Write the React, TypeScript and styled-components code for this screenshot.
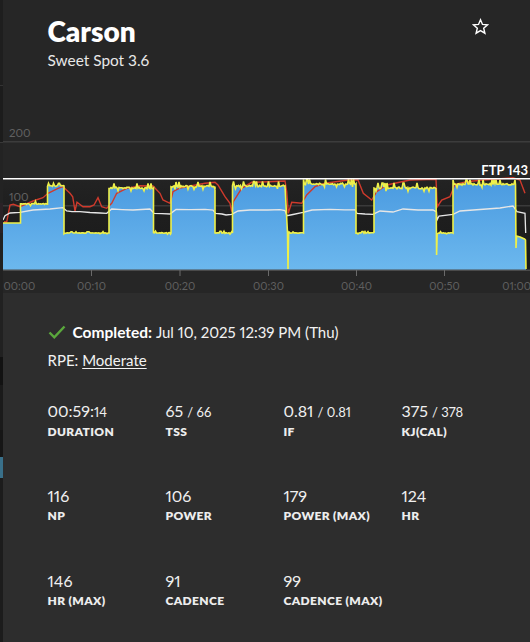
import React from "react";
import styled, { createGlobalStyle } from "styled-components";

const Global = createGlobalStyle`
  html, body { margin: 0; padding: 0; background: #262626; }
  body {
    font-family: Lato, "Open Sans", "Liberation Sans", sans-serif;
    font-variant-numeric: proportional-nums;
  }
`;

const Page = styled.div`
  width: 530px;
  height: 642px;
  display: flex;
  overflow: hidden;
  color: #fff;
`;
const Strip = styled.div`
  width: 3px;
  flex: none;
  display: flex;
  flex-direction: column;
`;
const StripPiece = styled.div<{ $h: number; $c: string }>`
  height: ${(p) => p.$h}px;
  background: ${(p) => p.$c};
  flex: none;
`;
const Main = styled.main`
  flex: 1;
  min-width: 0;
  display: flex;
  flex-direction: column;
`;
const Header = styled.header`
  height: 125px;
  flex: none;
  box-sizing: border-box;
  padding: 15px 41px 0 44.5px;
  display: flex;
  justify-content: space-between;
  align-items: flex-start;
  background: #262626;
`;
const Title = styled.h1`
  margin: 0;
  font-size: 28px;
  line-height: 32px;
  font-weight: 800;
`;
const Subtitle = styled.p`
  margin: 3px 0 0;
  font-size: 15.4px;
  line-height: 20px;
  color: #e8e8e8;
`;
const StarIcon = styled.svg`
  width: 17px;
  height: 17px;
  margin-top: 3px;
  flex: none;
`;
const Chart = styled.svg`
  display: block;
  width: 527px;
  height: 168px;
  flex: none;
  background: #262626;
`;
const AxisText = styled.text`
  font-size: 11px;
  fill: #5f5f5f;
  font-family: Lato, sans-serif;
`;
const ScaleText = styled.text`
  font-size: 11.5px;
  fill: #616161;
  font-family: Lato, sans-serif;
`;
const FtpText = styled.text`
  font-size: 13px;
  font-weight: 700;
  fill: #fff;
  font-family: Lato, sans-serif;
`;
const Summary = styled.section`
  flex: 1;
  min-height: 0;
  background: #2d2d2d;
  padding: 29px 0 0 44.5px;
`;
const Completed = styled.div`
  display: flex;
  align-items: center;
  font-size: 15px;
  line-height: 20px;
  color: #f2f2f2;
  white-space: pre;
`;
const CheckIcon = styled.svg`
  width: 18px;
  height: 14px;
  margin-right: 7px;
  flex: none;
`;
const Strong = styled.strong`
  font-size: 15.5px;
  font-weight: 700;
  color: #fff;
`;
const Rpe = styled.div`
  margin-top: 8px;
  font-size: 15px;
  line-height: 20px;
  color: #f2f2f2;
`;
const RpeValue = styled.span`
  text-decoration: underline;
  text-underline-offset: 2px;
`;
const Stats = styled.div`
  margin-top: 31px;
  display: grid;
  grid-template-columns: repeat(4, 118px);
  grid-auto-rows: 85px;
`;
const Stat = styled.div`
  display: flex;
  flex-direction: column;
`;
const Value = styled.div`
  font-size: 16px;
  line-height: 20px;
  color: #f0f0f0;
`;
const Small = styled.span`
  font-size: 13px;
`;
const Label = styled.div`
  margin-top: 2px;
  font-size: 12px;
  line-height: 16px;
  font-weight: 800;
  letter-spacing: 0.35px;
  color: #ededed;
`;

type Pt = [number, number];

const noise = (i: number) => {
  const v = Math.sin(i * 12.9898 + 4.1) * 43758.5453;
  return v - Math.floor(v);
};

const bumpy = (x0: number, x1: number, y: number, amp: number, seed: number): Pt[] => {
  const out: Pt[] = [];
  for (let x = x0, i = seed; x <= x1; x += 1, i++) {
    const n = noise(i);
    const spike = n > 0.84 ? -amp * 1.8 : n < 0.08 ? amp * 1.1 : (n - 0.5) * amp * 0.9;
    out.push([x, y + spike]);
  }
  out.push([x1, y]);
  return out;
};

const power: Pt[] = [
  [3, 223], [20.5, 223],
  ...bumpy(20.5, 47.5, 204, 1.5, 10),
  ...bumpy(47.5, 64, 186, 1.5, 40),
  ...bumpy(64, 109, 233, 0.7, 70),
  ...bumpy(109, 153.5, 188, 2.5, 120),
  ...bumpy(153.5, 171, 233, 1, 170),
  ...bumpy(171, 215, 186.5, 2.5, 190),
  ...bumpy(215, 232.5, 233, 1, 240),
  ...bumpy(232.5, 285, 186, 2.5, 260),
  [287.5, 233], [288, 269], [288.6, 233],
  ...bumpy(289, 303.5, 233, 0.6, 320),
  ...bumpy(303.5, 356, 184, 2.5, 340),
  ...bumpy(356, 374, 233, 0.8, 400),
  ...bumpy(374, 436, 188, 2.8, 420),
  [436.6, 255], [437.2, 233],
  ...bumpy(437.5, 453, 233, 0.7, 490),
  ...bumpy(453, 515.5, 184.5, 2.5, 510),
  [516, 248], [516.6, 236],
  [520, 237], [524.5, 239], [525.5, 240], [526, 269],
];

const cadence: Pt[] = [
  [3, 220], [5, 215.7], [10, 213], [20, 212.3], [33, 210], [50, 209], [63, 207.7], [66.7, 211], [72, 211.6],
  [80, 211.7], [90, 212.5], [100, 213], [106.7, 213.3], [111.7, 209], [122, 209.6], [133, 210], [150, 209],
  [154, 213.3], [162, 213.6], [170, 214], [176, 209.5], [190, 209.7], [205, 209.3], [213, 210], [215.7, 213.3],
  [222, 214], [226, 215], [231.7, 214.3], [238, 211], [250, 210], [268, 210], [280, 209.6], [285, 210.5],
  [287, 215.7], [293, 214.5], [303, 212.3], [312, 210], [330, 209.3], [345, 209.8], [355, 209.8], [357, 213.3],
  [365, 214], [373, 214.3], [380, 211], [393, 212], [403, 209], [418, 210], [433, 210], [436.5, 212], [437, 220],
  [439, 216], [453, 214.3], [460, 211], [480, 209.5], [500, 208], [513, 206], [517, 211.7], [525, 213.3], [525.7, 233],
];

const hr: Pt[] = [
  [4, 221.7], [6.7, 222], [10, 205], [13.3, 204.3], [20, 206.7], [33, 201], [43, 197.7], [48, 193.3], [58, 188.3],
  [63, 186.7], [70, 193.3], [72.7, 196.7], [75, 211], [77, 202.3], [83, 206.7], [90, 206.7], [94, 205], [98, 197.7],
  [101.7, 206.7], [106.7, 208.3], [111.7, 203.3], [116.7, 193.3], [126.7, 188.3], [140, 185.7], [153, 186],
  [160, 193.3], [163, 200], [170, 203.3], [173, 191.7], [180, 188], [191.7, 185.7], [205, 183.3], [215, 182.3],
  [218, 185], [225, 196.7], [230, 203.3], [231.7, 211.7], [233.3, 201.7], [241.7, 188.3], [251.7, 182.3],
  [268, 181.7], [285, 181], [286.7, 191.7], [288.3, 213.3], [291.7, 202.3], [301.7, 203.3], [306.7, 195],
  [315, 186.7], [325, 183.3], [348.3, 180], [358, 180], [363.3, 193.3], [371.7, 200], [376.7, 191.7], [386.7, 185],
  [410, 180], [436, 179.3], [437.3, 206.7], [441.7, 200], [450, 196.7], [455, 184.3], [466.7, 181.7], [483, 180],
  [513, 177.7], [520, 180], [525, 193.3],
];

const toPoints = (pts: Pt[]) => pts.map(([x, y]) => `${x.toFixed(1)},${y.toFixed(1)}`).join(" ");

const ticks = [91, 179.5, 268, 356, 444];
const tickLabels = ["00:10", "00:20", "00:30", "00:40", "00:50"];

const stats: { value: React.ReactNode; label: string }[] = [
  { value: <>00:59:<Small>14</Small></>, label: "DURATION" },
  { value: <>65 <Small>/ 66</Small></>, label: "TSS" },
  { value: <>0.81 <Small>/ 0.81</Small></>, label: "IF" },
  { value: <>375 <Small>/ 378</Small></>, label: "KJ(CAL)" },
  { value: "116", label: "NP" },
  { value: "106", label: "POWER" },
  { value: "179", label: "POWER (MAX)" },
  { value: "124", label: "HR" },
  { value: "146", label: "HR (MAX)" },
  { value: "91", label: "CADENCE" },
  { value: "99", label: "CADENCE (MAX)" },
];

const strip: [number, string][] = [
  [85, "#1e1e1e"], [1, "#333"], [56, "#1c1c1c"], [1, "#383838"], [60, "#232323"], [30, "#2a2226"], [124, "#212121"],
  [28, "#121212"], [45, "#1a1a1a"], [27, "#161616"], [21, "#39708a"], [164, "#1c1c1c"],
];

export default function App() {
  return (
    <Page>
      <Global />
      <Strip>
        {strip.map(([h, c], i) => (
          <StripPiece key={i} $h={h} $c={c} />
        ))}
      </Strip>
      <Main>
        <Header>
          <div>
            <Title>Carson</Title>
            <Subtitle>Sweet Spot 3.6</Subtitle>
          </div>
          <StarIcon viewBox="0 0 24 24" fill="none" stroke="#fff" strokeWidth="2" strokeLinejoin="miter">
            <path d="M12 2.5l2.8 6.6 7.2.6-5.5 4.7 1.7 7-6.200-3.700-6.200 3.700 1.700-7L2 9.700l7.200-.6z" />
          </StarIcon>
        </Header>
        <Chart viewBox="3 125 527 168">
          <defs>
            <linearGradient id="fill" x1="0" y1="180" x2="0" y2="270" gradientUnits="userSpaceOnUse">
              <stop offset="0" stopColor="#4a9ae0" />
              <stop offset="1" stopColor="#6cb8ee" />
            </linearGradient>
            <linearGradient id="plot" x1="0" y1="179" x2="0" y2="270" gradientUnits="userSpaceOnUse">
              <stop offset="0" stopColor="#232323" />
              <stop offset="0.3" stopColor="#1f1f1f" />
              <stop offset="1" stopColor="#1a1a1a" />
            </linearGradient>
          </defs>
          <rect x="3" y="179" width="527" height="91" fill="url(#plot)" />
          <rect x="3" y="141" width="527" height="1.5" fill="#3c3c3c" />
          <rect x="3" y="205" width="527" height="1.5" fill="#3a3a3a" />
          <ScaleText x="9" y="136.500">200</ScaleText>
          <ScaleText x="9" y="201">100</ScaleText>
          <polygon points={toPoints([[3, 270], ...power, [526, 270]])} fill="url(#fill)" />
          <polyline points={toPoints(hr)} fill="none" stroke="#cf3a2c" strokeWidth="1.4" />
          <polyline points={toPoints(cadence)} fill="none" stroke="#e6e6e6" strokeWidth="1.3" />
          <polyline points={toPoints(power)} fill="none" stroke="#eef04a" strokeWidth="1.6" />
          <rect x="3" y="178" width="527" height="1.5" fill="#fff" />
          <FtpText x="528" y="174.500" textAnchor="end">FTP 143</FtpText>
          <rect x="3" y="269.500" width="527" height="1.500" fill="#4a4a4a" />
          {ticks.map((x) => (
            <rect key={x} x={x} y="270" width="1" height="6" fill="#6a6a6a" />
          ))}
          <AxisText x="3.500" y="290">00:00</AxisText>
          {ticks.map((x, i) => (
            <AxisText key={x} x={x + 0.5} y="290" textAnchor="middle">
              {tickLabels[i]}
            </AxisText>
          ))}
          <AxisText x="531" y="290" textAnchor="end">01:00</AxisText>
        </Chart>
        <Summary>
          <Completed>
            <CheckIcon viewBox="0 0 18 14" fill="none" stroke="#5aa83c" strokeWidth="2.4">
              <path d="M1.500 7.500l4.800 4.800L16.500 1.500" />
            </CheckIcon>
            <Strong>Completed: </Strong>Jul 10, 2025 12:39 PM (Thu)
          </Completed>
          <Rpe>
            RPE: <RpeValue>Moderate</RpeValue>
          </Rpe>
          <Stats>
            {stats.map((s) => (
              <Stat key={s.label}>
                <Value>{s.value}</Value>
                <Label>{s.label}</Label>
              </Stat>
            ))}
          </Stats>
        </Summary>
      </Main>
    </Page>
  );
}
